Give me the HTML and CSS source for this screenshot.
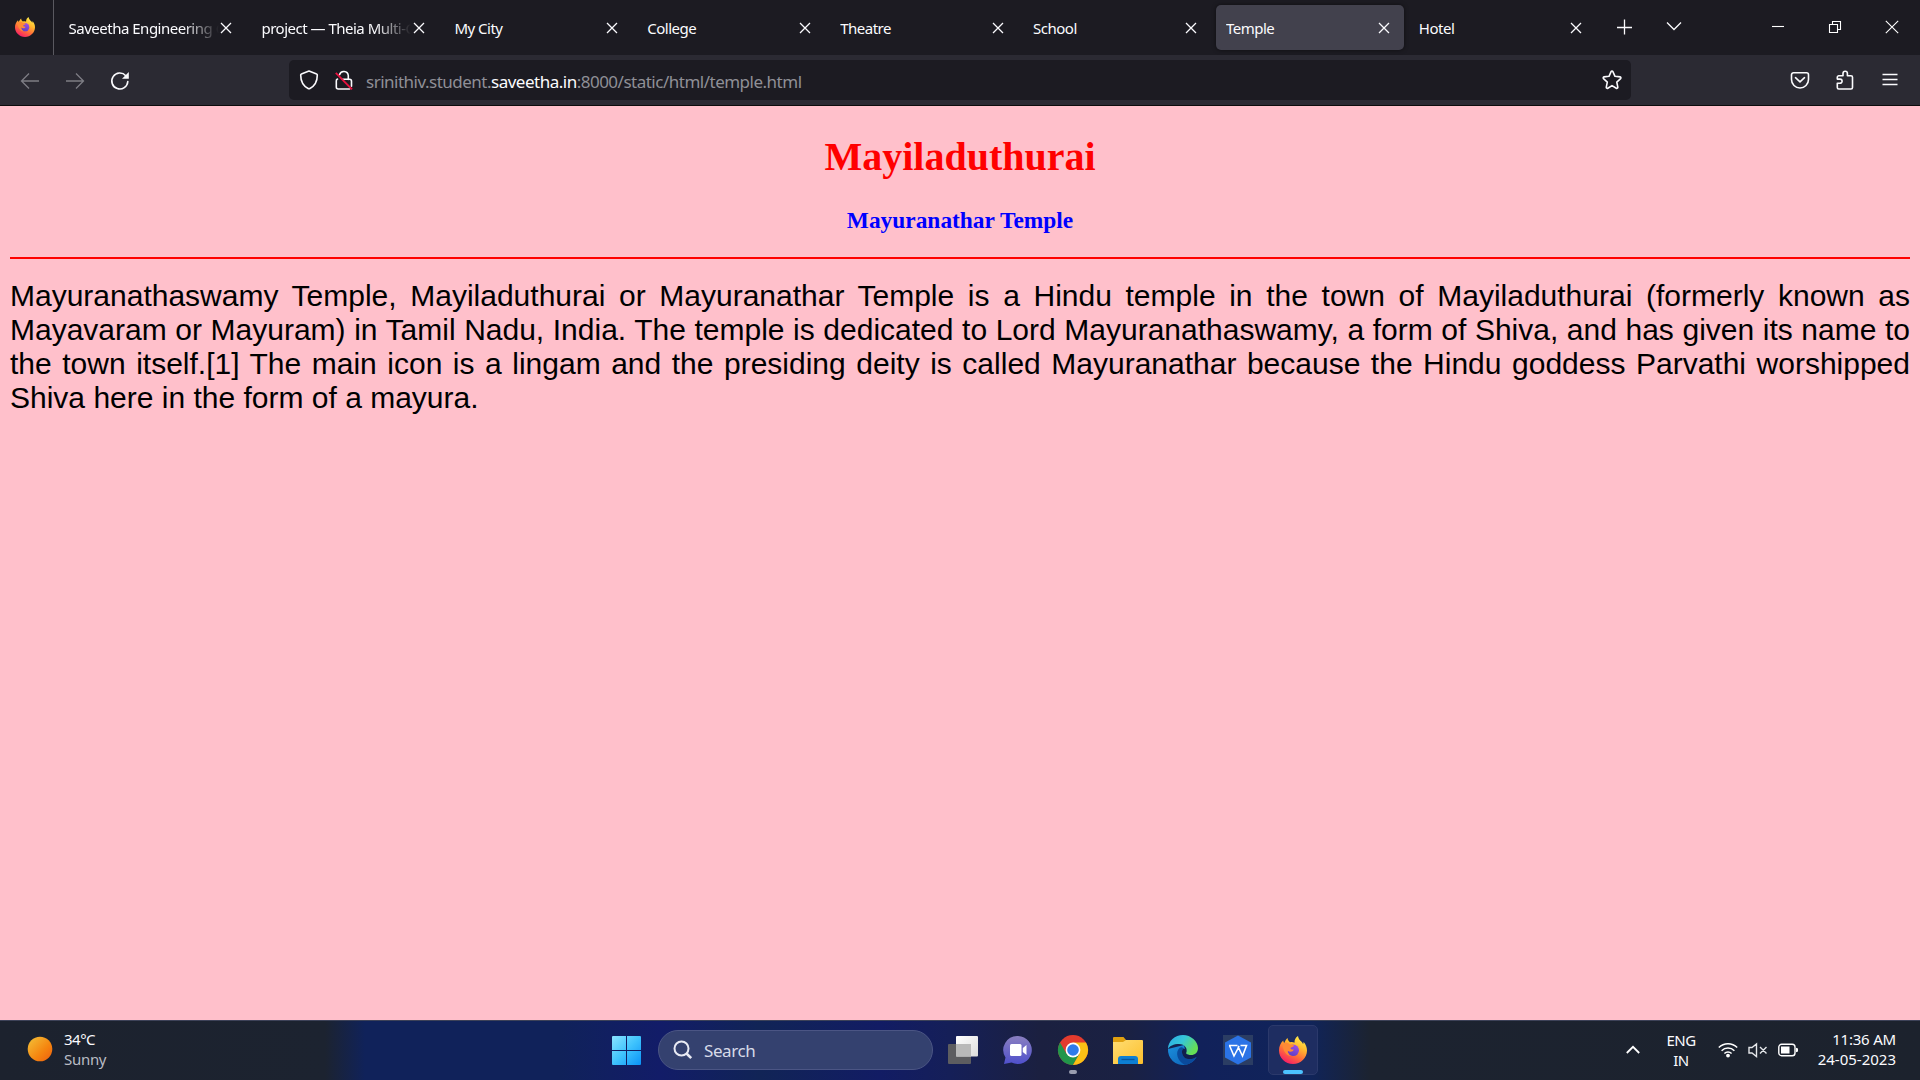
FILE: index.html
```html
<!DOCTYPE html>
<html lang="en">
<head>
<meta charset="utf-8">
<title>Temple</title>
<link rel="stylesheet" href="styles.css">
</head>
<body>
<svg class="defs" width="0" height="0" aria-hidden="true">
  <defs>
    <linearGradient id="flame" x1=".8" y1="0" x2=".25" y2="1"><stop offset="0" stop-color="#fff44f"/><stop offset=".35" stop-color="#ffb82e"/><stop offset=".65" stop-color="#ff6a3a"/><stop offset="1" stop-color="#f5156c"/></linearGradient>
    <linearGradient id="globe" x1=".7" y1="0" x2=".3" y2="1"><stop offset="0" stop-color="#a04fe8"/><stop offset="1" stop-color="#5b3fc4"/></linearGradient>
    <linearGradient id="sun" x1="0" y1="0" x2="1" y2="1"><stop offset="0" stop-color="#f3c33a"/><stop offset=".6" stop-color="#f5850f"/><stop offset="1" stop-color="#ee5d10"/></linearGradient>
    <linearGradient id="win" gradientUnits="userSpaceOnUse" x1="0" y1="0" x2="29" y2="29"><stop offset="0" stop-color="#8be3ff"/><stop offset=".5" stop-color="#3fc3fd"/><stop offset="1" stop-color="#0a92f8"/></linearGradient>
    <linearGradient id="chat" x1=".5" y1="0" x2=".5" y2="1"><stop offset="0" stop-color="#8a7fc0"/><stop offset="1" stop-color="#4f50cc"/></linearGradient>
    <linearGradient id="folder" x1="0" y1="0" x2="1" y2="1"><stop offset="0" stop-color="#ffdd73"/><stop offset="1" stop-color="#fcbf2c"/></linearGradient>
    <linearGradient id="edgetop" x1="0" y1="0" x2="1" y2=".5"><stop offset="0" stop-color="#2aa9e8"/><stop offset=".5" stop-color="#36c6d8"/><stop offset="1" stop-color="#66df55"/></linearGradient>
    <linearGradient id="edgelow" x1="0" y1="0" x2="1" y2="1"><stop offset="0" stop-color="#1b8fdd"/><stop offset="1" stop-color="#0c5fb4"/></linearGradient>
    <linearGradient id="pane" x1="0" y1="0" x2="1" y2="1"><stop offset="0" stop-color="#fff"/><stop offset="1" stop-color="#dcdcdc"/></linearGradient>
    <symbol id="x" viewBox="0 0 12 12"><path d="M1 1l10 10M11 1L1 11" fill="none" stroke="#fbfbfe" stroke-width="1.3"/></symbol>
    <symbol id="firefox" viewBox="0 0 28 28">
      <path d="M14 28C6.2 28 0 22 0 14.500C0 10.500 1.500 7 4.200 4.500C4.300 5.700 4.700 6.500 5.300 7C6 5.200 7 3.300 8.600 2C8.600 3.700 9.500 5 11 6.200C13 6 14 6 15.500 6.800C15.300 4 16.500 1.500 19 0C19.300 2.700 20.800 4 22.300 5.500C23.200 6.300 23.700 7 24 8C24.600 7.500 24.600 6.500 24.500 5.700C26.800 8.300 28 11.300 28 14.500C28 22 21.700 28 14 28Z" fill="url(#flame)"/>
      <circle cx="14.200" cy="14.300" r="5.800" fill="url(#globe)"/>
      <path d="M3.500 8C6 6 9 6.200 11 8.500C12.500 8.600 14.800 8.700 15 9.500C14.500 11 12 11 11.600 12C11.300 13.400 13 13.700 14.800 13.600C14 16 11 16.500 8.700 14.800C8.700 18 10.500 19.500 13 20C8 20.500 4 16 3.500 8Z" fill="#ff8a35"/>
    </symbol>
  </defs>
</svg>

<header class="tabstrip">
  <div class="view"><svg width="20" height="20"><use href="#firefox"/></svg></div>
  <nav class="tabs">
    <div class="tab"><span class="label fade">Saveetha Engineering College</span><svg class="close"><use href="#x"/></svg></div>
    <div class="tab"><span class="label fade">project — Theia Multi-Cloud</span><svg class="close"><use href="#x"/></svg></div>
    <div class="tab"><span class="label">My City</span><svg class="close"><use href="#x"/></svg></div>
    <div class="tab"><span class="label">College</span><svg class="close"><use href="#x"/></svg></div>
    <div class="tab"><span class="label">Theatre</span><svg class="close"><use href="#x"/></svg></div>
    <div class="tab"><span class="label">School</span><svg class="close"><use href="#x"/></svg></div>
    <div class="tab active"><span class="label">Temple</span><svg class="close"><use href="#x"/></svg></div>
    <div class="tab"><span class="label">Hotel</span><svg class="close"><use href="#x"/></svg></div>
  </nav>
  <div class="tabtools">
    <svg width="16" height="16" viewBox="0 0 16 16"><path d="M8.500 .5v15M1 8.500h15" class="line"/></svg>
    <svg width="16" height="16" viewBox="0 0 16 16"><path d="M1 3.500l7 7 7-7" class="line"/></svg>
  </div>
  <div class="winctl">
    <svg width="14" height="14" viewBox="0 0 14 14"><path d="M1 6.500h12" class="thin"/></svg>
    <svg width="14" height="14" viewBox="0 0 14 14"><path d="M1.500 4.500h8v8h-8zM4.500 4.500v-3h8v8h-3" class="thin"/></svg>
    <svg width="14" height="14" viewBox="0 0 14 14"><path d="M.8 .8l12.400 12.400M13.200 .8L.8 13.200" class="thin"/></svg>
  </div>
</header>

<div class="navbar">
  <div class="navbtns">
    <svg class="dim" width="20" height="20" viewBox="0 0 20 20"><path d="M19 10H1.500M9 2.500L1.500 10 9 17.500" class="line"/></svg>
    <svg class="dim" width="20" height="20" viewBox="0 0 20 20"><path d="M1 10h17.500M11 2.500l7.500 7.500-7.500 7.500" class="line"/></svg>
    <svg width="20" height="20" viewBox="0 0 20 20"><path d="M17.800 10.500A8 8 0 1 1 15.800 4.700" class="bold"/><path d="M18.800 1v6.800H12z" fill="#fbfbfe"/></svg>
  </div>
  <div class="urlbar">
    <svg width="20" height="20" viewBox="0 0 20 20"><path d="M10 1.100L17.600 4a1 1 0 0 1 .7 1c0 6-2.700 11-7.400 13.500a2 2 0 0 1-1.800 0C4.400 16 1.700 11 1.700 5a1 1 0 0 1 .7-1z" class="bold"/></svg>
    <svg class="lock" width="20" height="20" viewBox="0 0 20 20"><path d="M5.500 4.800A4.500 4.500 0 0 1 14.300 5.500V9.500M3.500 9a2 2 0 0 0-1.200 2v6a2 2 0 0 0 2 2h11.300M8.500 9.300H15.500a2 2 0 0 1 2 2v5" class="bold"/><path d="M1.800 2.800L18 19.300" stroke="#e8123f" stroke-width="1.900"/></svg>
    <span class="url">srinithiv.student.<b>saveetha.in</b>:8000/static/html/temple.html</span>
    <svg class="star" width="20" height="20" viewBox="0 0 20 20"><path d="M9.100 1.600a1 1 0 0 1 1.800 0l2.100 4.700 5.100.6a1 1 0 0 1 .5 1.700l-3.800 3.500 1 5a1 1 0 0 1-1.500 1.100L10 15.600l-4.200 2.600a1 1 0 0 1-1.500-1.100l1-5L1.500 8.600A1 1 0 0 1 2 6.900l5-.6z" class="bold"/></svg>
  </div>
  <div class="actions">
    <svg width="20" height="20" viewBox="0 0 20 20"><path d="M3.500 2.800h13a2 2 0 0 1 2 2V9.500a8.400 8.400 0 0 1-17 0V4.800a2 2 0 0 1 2-2zM5.500 7.700L10 11.800l4.500-4.100" class="bold"/></svg>
    <svg width="20" height="20" viewBox="0 0 20 20"><path d="M3.800 5.800H8V3.400a2.200 2.200 0 0 1 4.400 0V5.800H16a1.500 1.500 0 0 1 1.500 1.500V17.500A1.500 1.500 0 0 1 16 19H3.800a1.500 1.500 0 0 1-1.500-1.500v-4.200H5a2 2 0 0 0 0-4.200H2.300V7.300a1.500 1.500 0 0 1 1.500-1.500z" class="bold"/></svg>
    <svg width="20" height="20" viewBox="0 0 20 20"><path d="M2.500 4.500h15M2.500 9.500h15M2.500 14.500h15" class="line"/></svg>
  </div>
</div>

<main class="page">
  <h1>Mayiladuthurai</h1>
  <h3>Mayuranathar Temple</h3>
  <hr>
  <p>Mayuranathaswamy Temple, Mayiladuthurai or Mayuranathar Temple is a Hindu temple in the town of Mayiladuthurai (formerly known as Mayavaram or Mayuram) in Tamil Nadu, India. The temple is dedicated to Lord Mayuranathaswamy, a form of Shiva, and has given its name to the town itself.[1] The main icon is a lingam and the presiding deity is called Mayuranathar because the Hindu goddess Parvathi worshipped Shiva here in the form of a mayura.</p>
</main>

<footer class="taskbar">
  <div class="weather">
    <svg width="26" height="26"><circle cx="13" cy="13" r="12.300" fill="url(#sun)"/></svg>
    <div class="stack"><span>34°C</span><span class="soft">Sunny</span></div>
  </div>
  <div class="apps">
    <svg class="start" width="29" height="29" viewBox="0 0 29 29"><path d="M1 0h13v14H0V1a1 1 0 0 1 1-1zM15 0h13a1 1 0 0 1 1 1v13H15zM0 15h14v14H1a1 1 0 0 1-1-1zM15 15h14v13a1 1 0 0 1-1 1H15z" fill="url(#win)"/></svg>
    <div class="search"><svg width="20" height="20" viewBox="0 0 20 20"><circle cx="8.500" cy="8.500" r="7" fill="none" stroke="#e8eaf4" stroke-width="2"/><path d="M13.500 13.500l4.700 4.700" stroke="#e8eaf4" stroke-width="2.600"/></svg><span>Search</span></div>
    <div class="app"><svg width="30" height="30" viewBox="0 0 30 30"><rect y="9" width="23" height="20" rx="1" fill="#5d5d60"/><rect x="8" y="1" width="22" height="20.500" rx="1" fill="url(#pane)"/><path d="M8 9h15v12.500H8z" fill="#b9b9b9"/></svg></div>
    <div class="app"><svg width="30" height="30" viewBox="0 0 30 30"><path d="M15 1a14 14 0 1 1-6.500 26.500L1 29l1.500-6.500A14 14 0 0 1 15 1z" fill="url(#chat)"/><rect x="7" y="9" width="11.500" height="12" rx="1.500" fill="#fff"/><path d="M19.800 13l3.700-3v10l-3.700-3z" fill="#fff"/></svg></div>
    <div class="app"><svg width="30" height="30" viewBox="0 0 30 30"><circle cx="15" cy="15" r="15" fill="#e33b2e"/><path d="M2 7.500A15 15 0 0 0 15 30L21.500 18.700H8.500z" fill="#21964a"/><path d="M15 30A15 15 0 0 0 28 7.500H15L21.500 18.700z" fill="#fcc115"/><circle cx="15" cy="15" r="7.400" fill="#fff"/><circle cx="15" cy="15" r="5.800" fill="#2f7bea"/></svg><i class="dot"></i></div>
    <div class="app"><svg width="30" height="30" viewBox="0 0 30 30"><path d="M0 3a1 1 0 0 1 1-1h9.500l2.500 3v4H0z" fill="#e0a010"/><path d="M0 7h10l3-2h16a1 1 0 0 1 1 1v22a1 1 0 0 1-1 1H0z" fill="url(#folder)"/><path d="M5 29v-5a3 3 0 0 1 3-3h14a3 3 0 0 1 3 3v5z" fill="#0d7fd3"/><path d="M8.500 24.500h13" stroke="#07559d" stroke-width="1.300"/></svg></div>
    <div class="app"><svg width="30" height="30" viewBox="0 0 30 30"><path d="M0 14A15 15 0 0 0 17 29.900A15 15 0 0 0 28.500 22L18 19L16 10z" fill="url(#edgelow)"/><path d="M0 14C0 6 7 0 15 0S30 6.500 30 13C30 17.500 27 20 23 20C19 20 17.500 18.700 18.200 17.500C20 14 17 9 11 9C5.500 9 1.500 11 0 14z" fill="url(#edgetop)"/><path d="M11.500 13C7 17 9 26 17 29.900A15 15 0 0 0 28.500 22C22 26 14.500 24 14 17.500C13.800 15.500 14.500 14 15.500 13.500C14.500 12 12.500 12 11.500 13z" fill="#0a4a9c"/><path d="M14 17.500C14.500 24 22 26 28 22.200L28.500 20.500C27 20 25 20.200 23 20C19 20 17.500 18.700 18.200 17.500C18.500 15.500 17.500 14 15.500 13.500C14.500 14 13.800 15.500 14 17.500z" fill="#111f4d"/></svg></div>
    <div class="app"><svg width="30" height="30" viewBox="0 0 30 30"><path d="M0 0h30v30H0z" fill="#2b3d63"/><path d="M15 .5l13 7v15l-13 7-13-7v-15z" fill="#2b73e6"/><path d="M6 10.500H14.500M6.500 10.500l4.500 10.500 4.500-8.500 4 8.500 4-10.500H17.500M16 10.800l-1 2" fill="none" stroke="#fff" stroke-width="1.600"/></svg></div>
    <div class="app current"><svg width="28" height="28"><use href="#firefox"/></svg><i class="dot wide"></i></div>
  </div>
  <div class="tray">
    <svg width="16" height="16" viewBox="0 0 16 16"><path d="M1.800 11L8 4.800l6.200 6.200" fill="none" stroke="#fff" stroke-width="1.800"/></svg>
    <div class="stack lang"><span>ENG</span><span>IN</span></div>
    <div class="status">
      <svg width="20" height="16" viewBox="0 0 20 16"><path d="M.8 5.500a13 13 0 0 1 18.400 0M3.600 8.700a9 9 0 0 1 12.800 0M6.400 11.500a5 5 0 0 1 7.200 0" fill="none" stroke="#fff" stroke-width="1.500"/><circle cx="10" cy="13.600" r="1.900" fill="#fff"/></svg>
      <svg width="20" height="16" viewBox="0 0 20 16"><path d="M1 5.500h3L8.500 2v12.500L4 11H1zM12 5l6.500 6.500M18.500 5L12 11.500" fill="none" stroke="#e4e6ea" stroke-width="1.400"/></svg>
      <svg width="20" height="16" viewBox="0 0 20 16"><rect x=".8" y="2.300" width="16.200" height="11.400" rx="2.800" fill="none" stroke="#fff" stroke-width="1.400"/><path d="M3 4.500h8.500v7H3zM18 5.800l2 .8v2.800l-2 .8z" fill="#fff"/></svg>
    </div>
    <div class="stack clock"><span class="time">11:36 AM</span><span>24-05-2023</span></div>
  </div>
</footer>
</body>
</html>
```
FILE: styles.css
```css
* { box-sizing: border-box; }
body {
  margin: 0;
  width: 1920px;
  height: 1080px;
  display: flex;
  flex-direction: column;
  overflow: hidden;
  font-family: "Noto Sans", sans-serif;
  color: #fbfbfe;
}
svg { display: block; flex: none; overflow: visible; }
.line { fill: none; stroke: #fbfbfe; stroke-width: 1.3; }
.bold { fill: none; stroke: #fbfbfe; stroke-width: 1.6; stroke-linejoin: round; stroke-linecap: round; }
.thin { fill: none; stroke: #fff; stroke-width: 1.1; }

.tabstrip { height: 55px; flex: none; display: flex; background: #1c1b22; }
.view { width: 54px; padding: 17px 0 0 15px; border-right: 1px solid #5a5960; }
.tabs { display: flex; gap: 4.9px; padding: 5px 0 5px 4.6px; }
.tab {
  width: 188px;
  height: 45px;
  display: flex;
  align-items: center;
  justify-content: space-between;
  padding: 0 14.4px 0 10px;
  border-radius: 5px;
  font-size: 15px;
  letter-spacing: -0.5px;
  white-space: nowrap;
}
.active { background: #42414d; box-shadow: 0 0 4px rgba(0, 0, 0, .5); }
.label { width: 150px; overflow: hidden; line-height: 22px; padding-top: 1px; }
.fade { -webkit-mask-image: linear-gradient(90deg, #000 76%, transparent); mask-image: linear-gradient(90deg, #000 76%, transparent); }
.close { width: 12px; height: 12px; }
.tabtools { display: flex; gap: 34px; padding: 19px 0 0 19px; }
.winctl { display: flex; gap: 43px; margin-left: auto; padding: 20px 21px 0 0; }

.navbar { height: 51px; flex: none; display: flex; align-items: flex-start; background: #2b2a33; border-bottom: 1px solid #0c0c0d; }
.navbtns { display: flex; gap: 25px; padding: 16px 0 0 20px; }
.dim { opacity: .4; }
.urlbar {
  width: 1342px;
  height: 40px;
  display: flex;
  align-items: center;
  margin: 5px 0 0 159px;
  padding: 0 9px 0 10px;
  background: #1c1b22;
  border-radius: 5px;
}
.lock { margin-left: 15px; }
.url { margin-left: 12px; font-size: 17px; letter-spacing: -0.5px; color: #8f8f96; line-height: 24px; padding-top: 3px; }
.url b { font-weight: 400; color: #fbfbfe; }
.star { margin-left: auto; }
.actions { display: flex; gap: 25px; margin-left: auto; padding: 15px 20px 0 0; }

.page { flex: 1; padding: 0 10px; background: #ffc0cb; font-family: "Liberation Serif", serif; text-align: center; }
.page h1 { margin: 28px 0 0; font-size: 40px; line-height: 46px; color: #f00; }
.page h3 { margin: 27px 0 0; font-size: 23.4px; line-height: 27px; color: #00f; }
.page hr { height: 2px; margin: 23px 0 0; border: 0; background: #f00; }
.page p { margin: 20px 0 0; font: 30px/34px "Liberation Sans", sans-serif; color: #000; text-align: justify; }

.taskbar {
  height: 60px;
  flex: none;
  display: flex;
  align-items: flex-start;
  border-top: 1px solid #3d4258;
  background: linear-gradient(90deg, #1c222e 0, #1c2330 325px, #10225a 365px, #10225a 560px, #121c68 660px, #112456 760px, #121c64 880px, #151f58 950px, #1b2040 1040px, #1a2143 1130px, #11215a 1200px, #10245a 1310px, #1c2330 1370px, #1c222d 100%);
  font-size: 15px;
}
.stack { display: flex; flex-direction: column; line-height: 20px; letter-spacing: -0.5px; }
.soft { color: #b9bcc4; letter-spacing: -0.3px; }
.weather { display: flex; padding: 8px 0 0 27px; width: 611px; }
.weather svg { margin-top: 7px; }
.weather .stack { margin-left: 11px; }
.apps { display: flex; align-items: flex-start; }
.start { margin: 15px 17px 0 1px; }
.search {
  width: 275px;
  height: 40px;
  display: flex;
  align-items: center;
  gap: 11px;
  margin: 9px 5px 0 0;
  padding-left: 14px;
  border: 1px solid #4b5584;
  border-radius: 20px;
  background: #34416f;
  font-size: 17px;
  letter-spacing: -0.4px;
  color: #d7dae8;
}
.app { position: relative; width: 50px; height: 50px; margin: 4px 5px 0 0; display: flex; justify-content: center; padding-top: 10px; border-radius: 5px; }
.current { background: #1e2d61; border: 1px solid #2b396b; }
.dot { position: absolute; left: 21px; bottom: 1px; width: 8px; height: 4px; border-radius: 2px; background: #9a9db0; }
.wide { left: 14px; bottom: 0; width: 20px; background: #4cc2ff; }
.tray { display: flex; align-items: flex-start; margin-left: auto; padding-right: 24px; }
.tray > svg { margin-top: 21px; }
.lang { margin: 9px 0 0 25px; width: 30px; align-items: center; }
.status { display: flex; gap: 10px; margin: 21px 0 0 22px; }
.clock { width: 78px; margin: 8px 0 0 20px; align-items: flex-end; white-space: nowrap; letter-spacing: 0; }
.time { letter-spacing: -0.2px; }
```
